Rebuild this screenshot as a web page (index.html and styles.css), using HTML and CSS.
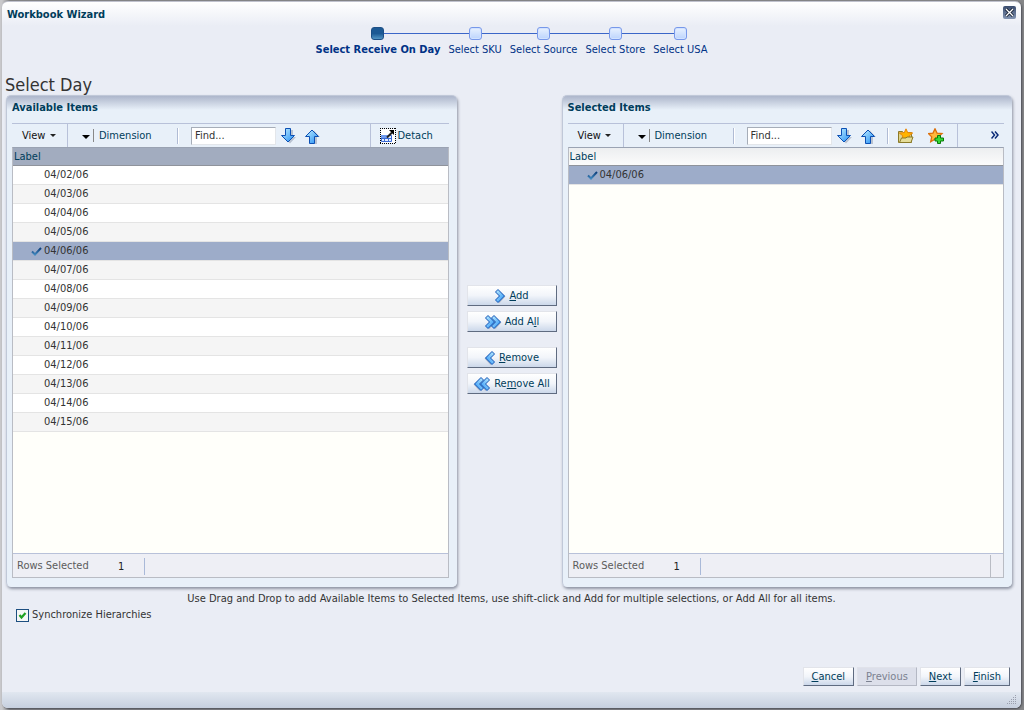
FILE: index.html
```html
<!DOCTYPE html>
<html lang="en">

	<head>
		<meta charset="UTF-8">
		<title>Workbook Wizard</title>
		<link rel="stylesheet" href="styles.css">
	</head>

	<body>
		<!-- shared icons -->
		<svg class="sprite" aria-hidden="true">
			<defs>
				<linearGradient id="blue" x1="0" y1="0" x2="1" y2="1">
					<stop offset="0" stop-color="#c4f0ff"/>
					<stop offset="1" stop-color="#1f8cf5"/>
				</linearGradient>
				<linearGradient id="tick" x1="0" y1="0" x2="0" y2="1">
					<stop offset="0" stop-color="#0b3c78"/>
					<stop offset="1" stop-color="#3f86bd"/>
				</linearGradient>
			</defs>
			<symbol id="arrow-down" viewBox="0 0 16 18">
				<path d="M6 3h6v7h3l-6 6.500-6-6.500h3z" fill="#9aa3b5" opacity=".6"/>
				<path d="M4.500 1.500h5v7h4l-6.500 6.500-6.500-6.500h4z" fill="url(#blue)" stroke="#0c50b4"/>
			</symbol>
			<symbol id="arrow-up" viewBox="0 0 16 18">
				<path d="M6 17h6v-7h3l-6-6.500-6 6.500h3z" fill="#9aa3b5" opacity=".6"/>
				<path d="M4.500 16.500h5v-7h4l-6.500-6.500-6.500 6.500h4z" fill="url(#blue)" stroke="#0c50b4"/>
			</symbol>
			<symbol id="check" viewBox="0 0 12 10">
				<path d="M1 5.500l3 3 6-6.500" fill="none" stroke="url(#tick)" stroke-width="2"/>
			</symbol>
			<symbol id="chevron" viewBox="0 0 12 14">
				<path d="M3 3.500l2-1.500 6.500 5.500-6 6.500-2-1.500 4-4.500z" fill="#9aa3b5" opacity=".6"/>
				<path d="M1.500 3l2.500-2.500 6.500 6.500-6.500 6.500-2.500-2.500 4-4z" fill="url(#blue)" stroke="#0c50b4"/>
			</symbol>
		</svg>

		<div class="dialog">
			<div class="title-bar">
				<h1>Workbook Wizard</h1>
				<button type="button" class="close" aria-label="Close">
					<svg width="13" height="13" viewBox="0 0 13 13"><path d="M3 3l7 7M10 3l-7 7" stroke="#111a2c" stroke-width="3"/><path d="M3 3l7 7M10 3l-7 7" stroke="#fff" stroke-width="1.300"/></svg>
				</button>
			</div>

			<ol class="train">
				<li class="current"><span class="rail"><i></i></span><a href="#">Select Receive On Day</a></li>
				<li><span class="rail"><i></i></span><a href="#">Select SKU</a></li>
				<li><span class="rail"><i></i></span><a href="#">Select Source</a></li>
				<li><span class="rail"><i></i></span><a href="#">Select Store</a></li>
				<li><span class="rail"><i></i></span><a href="#">Select USA</a></li>
			</ol>

			<h2 class="step-title">Select Day</h2>

			<div class="shuttle">
				<section class="panel">
					<h3>Available Items</h3>
					<div class="toolbar">
						<button type="button" class="view">View <span class="caret"></span></button>
						<button type="button" class="dimension"><span class="caret big"></span><span class="bar"></span>Dimension</button>
						<span class="sep"></span>
						<input type="text" class="find" value="Find..." aria-label="Find available items">
						<button type="button" class="tool" aria-label="Find next"><svg width="16" height="18"><use href="#arrow-down"/></svg></button>
						<button type="button" class="tool" aria-label="Find previous"><svg width="16" height="18"><use href="#arrow-up"/></svg></button>
						<button type="button" class="detach">
							<svg width="16" height="16" viewBox="0 0 16 16">
								<rect x="1" y="1" width="14" height="14" fill="#fff"/>
								<path d="M0 .5h16M0 15.500h16M.5 0v16M15.500 0v16" fill="none" stroke="#000" stroke-dasharray="1 1"/>
								<path d="M1.500 7.500h10v6h-10z" fill="#e4eeff" stroke="#3a6bd6"/>
								<path d="M1 7h7v3h-7z" fill="#6f9bee"/>
								<path d="M1 10.500h10M4.500 10v4M8.500 10v4" stroke="#3a6bd6"/>
								<path d="M7 9.500l5-5" stroke="#222" stroke-width="2"/>
								<path d="M9 2h5v5z" fill="#000"/>
							</svg>
							Detach
						</button>
					</div>
					<div class="grid">
						<div class="grid-body">
							<table class="sorted">
								<thead>
									<tr><th scope="col">Label</th></tr>
								</thead>
								<tbody>
									<tr><td>04/02/06</td></tr>
									<tr><td>04/03/06</td></tr>
									<tr><td>04/04/06</td></tr>
									<tr><td>04/05/06</td></tr>
									<tr class="selected"><td><svg width="12" height="10"><use href="#check"/></svg>04/06/06</td></tr>
									<tr><td>04/07/06</td></tr>
									<tr><td>04/08/06</td></tr>
									<tr><td>04/09/06</td></tr>
									<tr><td>04/10/06</td></tr>
									<tr><td>04/11/06</td></tr>
									<tr><td>04/12/06</td></tr>
									<tr><td>04/13/06</td></tr>
									<tr><td>04/14/06</td></tr>
									<tr><td>04/15/06</td></tr>
								</tbody>
							</table>
						</div>
						<div class="grid-status"><span>Rows Selected</span><b>1</b></div>
					</div>
				</section>

				<div class="moves">
					<button type="button" class="btn"><svg width="12" height="14"><use href="#chevron"/></svg><span><u>A</u>dd</span></button>
					<button type="button" class="btn"><svg width="18" height="14"><use href="#chevron" width="12"/><use href="#chevron" x="6" width="12"/></svg><span>Add A<u>l</u>l</span></button>
					<button type="button" class="btn second"><svg width="12" height="14" class="flip"><use href="#chevron"/></svg><span><u>R</u>emove</span></button>
					<button type="button" class="btn"><svg width="18" height="14" class="flip"><use href="#chevron" width="12"/><use href="#chevron" x="6" width="12"/></svg><span>Re<u>m</u>ove All</span></button>
				</div>

				<section class="panel">
					<h3>Selected Items</h3>
					<div class="toolbar">
						<button type="button" class="view">View <span class="caret"></span></button>
						<button type="button" class="dimension"><span class="caret big"></span><span class="bar"></span>Dimension</button>
						<span class="sep"></span>
						<input type="text" class="find" value="Find..." aria-label="Find selected items">
						<button type="button" class="tool" aria-label="Find next"><svg width="16" height="18"><use href="#arrow-down"/></svg></button>
						<button type="button" class="tool" aria-label="Find previous"><svg width="16" height="18"><use href="#arrow-up"/></svg></button>
						<span class="sep near"></span>
						<button type="button" class="tool fav" aria-label="Open favorites">
							<svg width="16" height="16" viewBox="0 0 16 16">
								<path d="M.5 14.500v-11h4l1 1h8v10z" fill="#ddd58e" stroke="#8a7a28"/>
								<path d="M8 .8l1.700 3.800 5 .4-3.500 2.800 1 4.200-4.200-2.200-4.200 2.200 1-4.200-3.500-2.800 5-.4z" fill="#ffb400" stroke="#e8860c"/>
								<path d="M1.500 14.500l2-4.500h4.500l1-1h6l-2 5.500z" fill="#e4dc98" stroke="#8a7a28"/>
							</svg>
						</button>
						<button type="button" class="tool fav" aria-label="Add to favorites">
							<svg width="16" height="16" viewBox="0 0 16 16">
								<path d="M7 .8l2 4.300 5 .5-3.700 3.300 1 4.900-4.300-2.600-4.300 2.600 1-4.900-3.200-3.300 4.500-.5z" fill="#ffb83c" stroke="#dc700c" stroke-width="1.300"/>
								<path d="M9.500 7.500h3v2.500h3v3h-3v2.500h-3v-2.500h-2.500v-3h2.500z" fill="#35d935" stroke="#087a08"/>
							</svg>
						</button>
						<button type="button" class="more" aria-label="More tools">
							<svg width="8" height="8" viewBox="0 0 8 8"><path d="M.5 .5l3 3.500-3 3.500M4 .5l3 3.500-3 3.500" fill="none" stroke="#0c2c78" stroke-width="1.500"/></svg>
						</button>
					</div>
					<div class="grid">
						<div class="grid-body">
							<table>
								<thead>
									<tr><th scope="col">Label</th></tr>
								</thead>
								<tbody>
									<tr class="selected"><td><svg width="12" height="10"><use href="#check"/></svg>04/06/06</td></tr>
								</tbody>
							</table>
						</div>
						<div class="grid-status with-end"><span>Rows Selected</span><b>1</b></div>
					</div>
				</section>
			</div>

			<p class="hint">Use Drag and Drop to add Available Items to Selected Items, use shift-click and Add for multiple selections, or Add All for all items.</p>
			<label class="sync"><input type="checkbox" checked>Synchronize Hierarchies</label>

			<div class="actions">
				<button type="button" class="btn"><span><u>C</u>ancel</span></button>
				<button type="button" class="btn" disabled><span><u>P</u>revious</span></button>
				<button type="button" class="btn"><span><u>N</u>ext</span></button>
				<button type="button" class="btn"><span><u>F</u>inish</span></button>
			</div>
			<div class="bottom-bar">
				<svg width="10" height="10" viewBox="0 0 10 10" fill="#9a9fae"><path d="M8 0h1v1h-1zM6 2h1v1h-1zM8 2h1v1h-1zM4 4h1v1h-1zM6 4h1v1h-1zM8 4h1v1h-1zM2 6h1v1h-1zM4 6h1v1h-1zM6 6h1v1h-1zM8 6h1v1h-1zM0 8h1v1h-1zM2 8h1v1h-1zM4 8h1v1h-1zM6 8h1v1h-1zM8 8h1v1h-1z"/></svg>
			</div>
		</div>
	</body>

</html>
```
FILE: styles.css
```css
* {
	box-sizing: border-box;
}

body {
	margin: 0;
	padding: 1px 3px 2px 2px;
	min-height: 100vh;
	display: flex;
	background: linear-gradient(to right, #c8c8cb, #c8c8cb 2px, #858688 10px);
	font-family: Tahoma, "DejaVu Sans Condensed", "DejaVu Sans", sans-serif;
	font-size: 11px;
	line-height: 14px;
	color: #333;
}

button,
input {
	font: inherit;
	color: inherit;
	margin: 0;
}

button {
	border: 0;
	padding: 0;
	background: none;
	white-space: nowrap;
}

svg {
	flex: none;
}

.sprite {
	position: absolute;
	width: 0;
	height: 0;
}

.dialog {
	flex: 1;
	min-width: 0;
	display: flex;
	flex-direction: column;
	background: linear-gradient(#fff, #eaedf5 24px);
	border-top: 1px solid #c0c2ce;
	border-radius: 6px;
	box-shadow: 1px 1px 2px #4c4f57;
	overflow: hidden;
}

.title-bar {
	display: flex;
	justify-content: space-between;
	align-items: flex-start;
	padding: 4px 5px 0 5px;
	height: 24px;
}

.title-bar h1 {
	margin: 0;
	padding-top: 2px;
	font-size: 11px;
	line-height: 14px;
	color: #003d5b;
}

.close {
	width: 13px;
	height: 13px;
	border-radius: 2px;
	background: linear-gradient(#3a4c6e, #8294b2);
}

.close svg {
	display: block;
}

/* train of steps */
.train {
	display: flex;
	justify-content: center;
	margin: 0;
	padding: 0;
	list-style: none;
	height: 49px;
}

.train a {
	display: block;
	padding: 2px 4px 0;
	color: #003286;
	text-decoration: none;
}

.train .current a {
	font-weight: bold;
}

.rail {
	display: flex;
	align-items: center;
	height: 15px;
}

.rail::before,
.rail::after {
	content: "";
	flex: 1;
	height: 1px;
	background: #3b66c8;
}

li:first-child .rail::before,
li:last-child .rail::after {
	background: none;
}

.rail i {
	width: 13px;
	height: 13px;
	border: 1px solid #7798ea;
	border-radius: 3px;
	background: linear-gradient(#e8f1ff, #bcd4fd);
	box-shadow: inset 0 0 0 1px #d2e2ff;
}

.current .rail i {
	border-color: #1d4f86;
	background: linear-gradient(#1c5994 50%, #5295c4);
	box-shadow: none;
}

.step-title {
	margin: 0;
	padding-left: 3px;
	font-size: 18px;
	line-height: 20px;
	font-weight: normal;
}

/* two lists with the move buttons between */
.shuttle {
	display: grid;
	grid-template-columns: 1fr 105px 1fr;
	padding: 0 9px 0 4px;
}

.panel {
	min-width: 0;
	padding: 0 8px 9px 5px;
	border: 1px solid #c0c8d8;
	border-width: 1px 0 0 1px;
	border-radius: 5px;
	background: linear-gradient(#adb6cb, #e8f0f9 14px);
	box-shadow: 1px 2px 3px #8e94a3;
}

.panel h3 {
	margin: 0;
	padding-top: 5px;
	height: 27px;
	font-size: 11px;
	line-height: 14px;
	color: #003d5b;
}

.toolbar {
	display: flex;
	align-items: center;
	height: 24px;
	border-top: 1px solid #b8c1d9;
}

.view {
	width: 56px;
	height: 23px;
	padding-left: 10px;
	text-align: left;
	color: #111;
	border-right: 1px solid #b8c1d9;
}

.caret {
	display: inline-block;
	margin-left: 1px;
	vertical-align: 2px;
	border: 3px solid transparent;
	border-top-color: #222;
	border-bottom: 0;
}

.caret.big {
	margin: 2px 3px 0 0;
	border-width: 4px;
	border-top-color: #000;
	border-bottom: 0;
}

.dimension {
	display: flex;
	align-items: center;
	width: 109px;
	padding-left: 14px;
	color: #003d5b;
}

.bar {
	width: 1px;
	height: 13px;
	margin-right: 5px;
	background: #888;
}

.sep {
	width: 2px;
	height: 16px;
	margin-right: 12px;
	background: #b0bbd4;
	border-right: 1px solid #fff;
}

.sep.near {
	margin: 0 5px 0 10px;
}

.find {
	width: 85px;
	height: 18px;
	padding: 0 3px;
	border: 1px solid #e3e6ea;
	border-top: 1px solid #a6adb8;
	border-left: 1px solid #a6adb8;
	border-radius: 0;
	background: #fff;
}

.tool {
	width: 16px;
	height: 18px;
	margin-left: 5px;
}

.tool + .tool {
	margin-left: 8px;
}

.tool svg {
	display: block;
}

.tool.fav {
	height: 16px;
	margin-left: 4px;
}

.tool.fav + .fav {
	margin-left: 14px;
}

.detach {
	display: flex;
	align-items: center;
	gap: 2px;
	width: 79px;
	height: 23px;
	margin-left: auto;
	padding-left: 9px;
	color: #003d5b;
	border-left: 1px solid #b8c1d9;
}

.more {
	width: 47px;
	height: 23px;
	margin-left: auto;
	padding-right: 5px;
	text-align: right;
	border-left: 1px solid #b8c1d9;
}

/* list */
.grid {
	border: 1px solid #b9bcc4;
	border-top-color: #9aa3b3;
}

.grid-body {
	min-height: 405px;
	background: #fffffa;
}

.grid table {
	width: 100%;
	border-collapse: separate;
	border-spacing: 0;
}

.grid th {
	height: 18px;
	padding: 1px 1px 0;
	text-align: left;
	font-weight: normal;
	color: #003d5b;
	background: linear-gradient(#eceef0, #fbfbfb);
	border-bottom: 1px solid #8f939b;
}

.grid .sorted th {
	background: #a2acbf;
}

.grid td {
	height: 19px;
	padding: 0 0 0 31px;
	background: #fff;
	border-bottom: 1px solid #e4e4e4;
}

.grid tr:nth-child(even) td {
	background: #f5f5f5;
}

.grid tr.selected td {
	padding-left: 18px;
	background: #9dacc9;
}

.grid td svg {
	margin-right: 1px;
	vertical-align: -2px;
}

.grid-status {
	display: flex;
	align-items: center;
	height: 24px;
	padding: 1px 0 0 4px;
	color: #5c5c5c;
	background: #eeeff5;
	border-top: 1px solid #b8c1d9;
}

.grid-status span {
	width: 101px;
}

.grid-status b {
	width: 27px;
	height: 17px;
	line-height: 17px;
	font-weight: normal;
	color: #222;
	border-right: 1px solid #a9b9d8;
}

.with-end::after {
	content: "";
	width: 12px;
	height: 23px;
	margin-left: auto;
	border-left: 1px solid #b9bcc4;
}

/* buttons */
.btn {
	display: flex;
	align-items: center;
	justify-content: center;
	gap: 3px;
	padding-top: 1px;
	color: #003d5b;
	border: 1px solid #e2e4ea;
	border-right-color: #5f6b80;
	border-bottom-color: #5f6b80;
	background: linear-gradient(#fff, #f2f5fa 50%, #ccd8ea);
}

.btn:disabled {
	color: #7b8190;
	background: #dcdfea;
	border-color: #e0e2ea #b4b8c4 #b4b8c4 #e0e2ea;
}

.flip {
	transform: scaleX(-1);
}

.moves {
	display: flex;
	flex-direction: column;
	justify-content: center;
	gap: 5px;
	padding: 0 5px 4px 10px;
}

.moves .btn {
	height: 21px;
}

.moves .second {
	margin-top: 10px;
}

.hint {
	margin: 5px 0 2px;
	text-align: center;
}

.sync {
	display: flex;
	align-items: center;
	gap: 3px;
	align-self: flex-start;
	margin-left: 14px;
}

.sync input {
	appearance: none;
	width: 13px;
	height: 13px;
	border: 1px solid #1d4f80;
	background: #f6f7f5 url("data:image/svg+xml,%3Csvg xmlns='http://www.w3.org/2000/svg' viewBox='0 0 11 11'%3E%3Cpath d='M2.500 5l2 2.500 4-4.500' fill='none' stroke='%2321a121' stroke-width='2.200'/%3E%3C/svg%3E") center no-repeat;
}

.actions {
	display: flex;
	justify-content: flex-end;
	gap: 3px;
	margin-top: auto;
	padding: 0 11px 6px;
}

.actions .btn {
	height: 19px;
	padding: 1px 8px 0;
}

.bottom-bar {
	display: flex;
	justify-content: flex-end;
	align-items: flex-end;
	height: 16px;
	padding: 0 4px 3px;
	background: linear-gradient(#e1e7f0, #c6cfdf);
}
```
